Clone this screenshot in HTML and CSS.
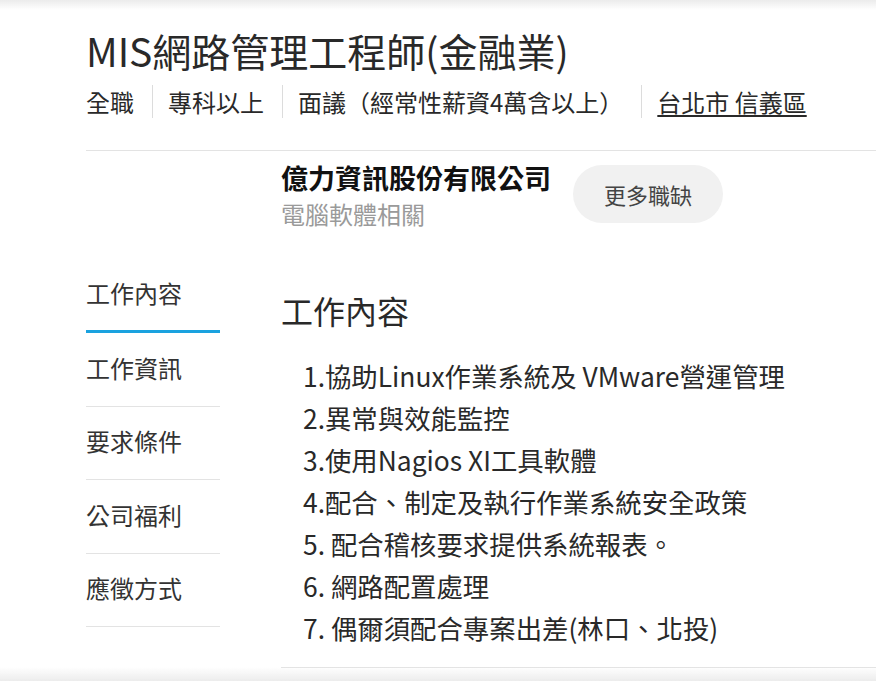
FILE: index.html
```html
<!DOCTYPE html>
<html lang="zh-Hant">
<head>
<meta charset="utf-8">
<title>MIS網路管理工程師(金融業)</title>
<link rel="stylesheet" href="styles.css">
</head>
<body>
<div class="top-shadow"></div>
<div class="page">
  <header class="job-header">
    <h1 class="job-title">MIS網路管理工程師(金融業)</h1>
    <ul class="job-meta">
      <li class="meta-item">全職</li>
      <li class="meta-item">專科以上</li>
      <li class="meta-item">面議（經常性薪資4萬含以上）</li>
      <li class="meta-item"><a class="meta-link" href="#">台北市 信義區</a></li>
    </ul>
  </header>
  <div class="divider"></div>
  <div class="layout">
    <nav class="side-nav">
      <a class="nav-item active" href="#">工作內容</a>
      <a class="nav-item" href="#">工作資訊</a>
      <a class="nav-item" href="#">要求條件</a>
      <a class="nav-item" href="#">公司福利</a>
      <a class="nav-item" href="#">應徵方式</a>
    </nav>
    <main class="main">
      <div class="company">
        <div class="company-info">
          <div class="company-name">億力資訊股份有限公司</div>
          <div class="company-cat">電腦軟體相關</div>
        </div>
        <button class="more-btn" type="button">更多職缺</button>
      </div>
      <section class="content">
        <h2 class="section-title">工作內容</h2>
        <div class="desc">
          <p class="desc-line">1.協助Linux作業系統及 VMware營運管理</p>
          <p class="desc-line">2.異常與效能監控</p>
          <p class="desc-line">3.使用Nagios XI工具軟體</p>
          <p class="desc-line">4.配合、制定及執行作業系統安全政策</p>
          <p class="desc-line">5. 配合稽核要求提供系統報表。</p>
          <p class="desc-line">6. 網路配置處理</p>
          <p class="desc-line">7. 偶爾須配合專案出差(林口、北投)</p>
        </div>
      </section>
    </main>
  </div>
</div>
<div class="bottom-shadow"></div>
</body>
</html>
```

FILE: styles.css
```css
* { box-sizing: border-box; }

html, body {
  margin: 0;
  padding: 0;
  background: #fff;
}

body {
  font-family: "Noto Sans CJK TC", "Noto Sans", "Liberation Sans", sans-serif;
  color: #333;
  overflow: hidden;
}

.top-shadow {
  position: fixed;
  top: 0;
  left: 0;
  right: 0;
  height: 10px;
  background: linear-gradient(to bottom, #ebebeb, rgba(255,255,255,0));
  z-index: 5;
}

.bottom-shadow {
  position: fixed;
  bottom: 0;
  left: 0;
  right: 0;
  height: 14px;
  background: linear-gradient(to top, #ececec, rgba(255,255,255,0));
  z-index: 5;
}

.page {
  padding: 25px 0 0 86px;
}

.job-title {
  margin: 0;
  font-size: 39px;
  line-height: 50px;
  font-weight: 400;
  color: #292929;
}

.job-meta {
  list-style: none;
  margin: 10px 0 0;
  padding: 0;
  display: flex;
  align-items: center;
}

.meta-item {
  font-size: 24px;
  line-height: 33px;
  padding: 0 18px 0 15px;
  color: #292929;
  border-left: 1px solid #dcdcdc;
}

.meta-item:first-child {
  padding-left: 0;
  border-left: none;
}

.meta-link {
  color: #292929;
  text-decoration: underline;
  text-decoration-thickness: 2px;
  text-underline-offset: 3px;
}

.divider {
  margin-top: 32px;
  border-top: 1px solid #e3e3e3;
}

.layout {
  display: flex;
  align-items: flex-start;
}

.side-nav {
  width: 134px;
  flex: none;
  padding-top: 109px;
  display: flex;
  flex-direction: column;
}

.nav-item {
  height: 73.5px;
  display: flex;
  align-items: center;
  padding-bottom: 4px;
  font-size: 24px;
  color: #333;
  text-decoration: none;
  border-bottom: 1px solid #e3e3e3;
}

.nav-item.active {
  height: 73px;
  padding-bottom: 6px;
  border-bottom: 3px solid #1aa2df;
}

.main {
  flex: 1;
  margin-left: 61px;
  padding-top: 9px;
  border-bottom: 1px solid #e3e3e3;
}

.company {
  display: flex;
  align-items: center;
  gap: 22px;
}

.company-name {
  font-size: 27px;
  line-height: 36px;
  font-weight: 700;
  color: #111;
}

.company-cat {
  font-size: 24px;
  line-height: 36px;
  color: #9a9a9a;
}

.more-btn {
  font-family: inherit;
  font-size: 22px;
  line-height: 30px;
  color: #444;
  background: #f1f1f1;
  border: none;
  border-radius: 29px;
  height: 58px;
  padding: 0 31px;
  margin-top: -4px;
}

.content {
  padding-top: 56px;
  padding-bottom: 18px;
}

.section-title {
  margin: 0;
  font-size: 32px;
  line-height: 44px;
  font-weight: 400;
  color: #292929;
}

.desc {
  margin-top: 23px;
  padding-left: 22px;
}

.desc-line {
  margin: 0;
  font-size: 26.4px;
  line-height: 42px;
  color: #292929;
}
```
